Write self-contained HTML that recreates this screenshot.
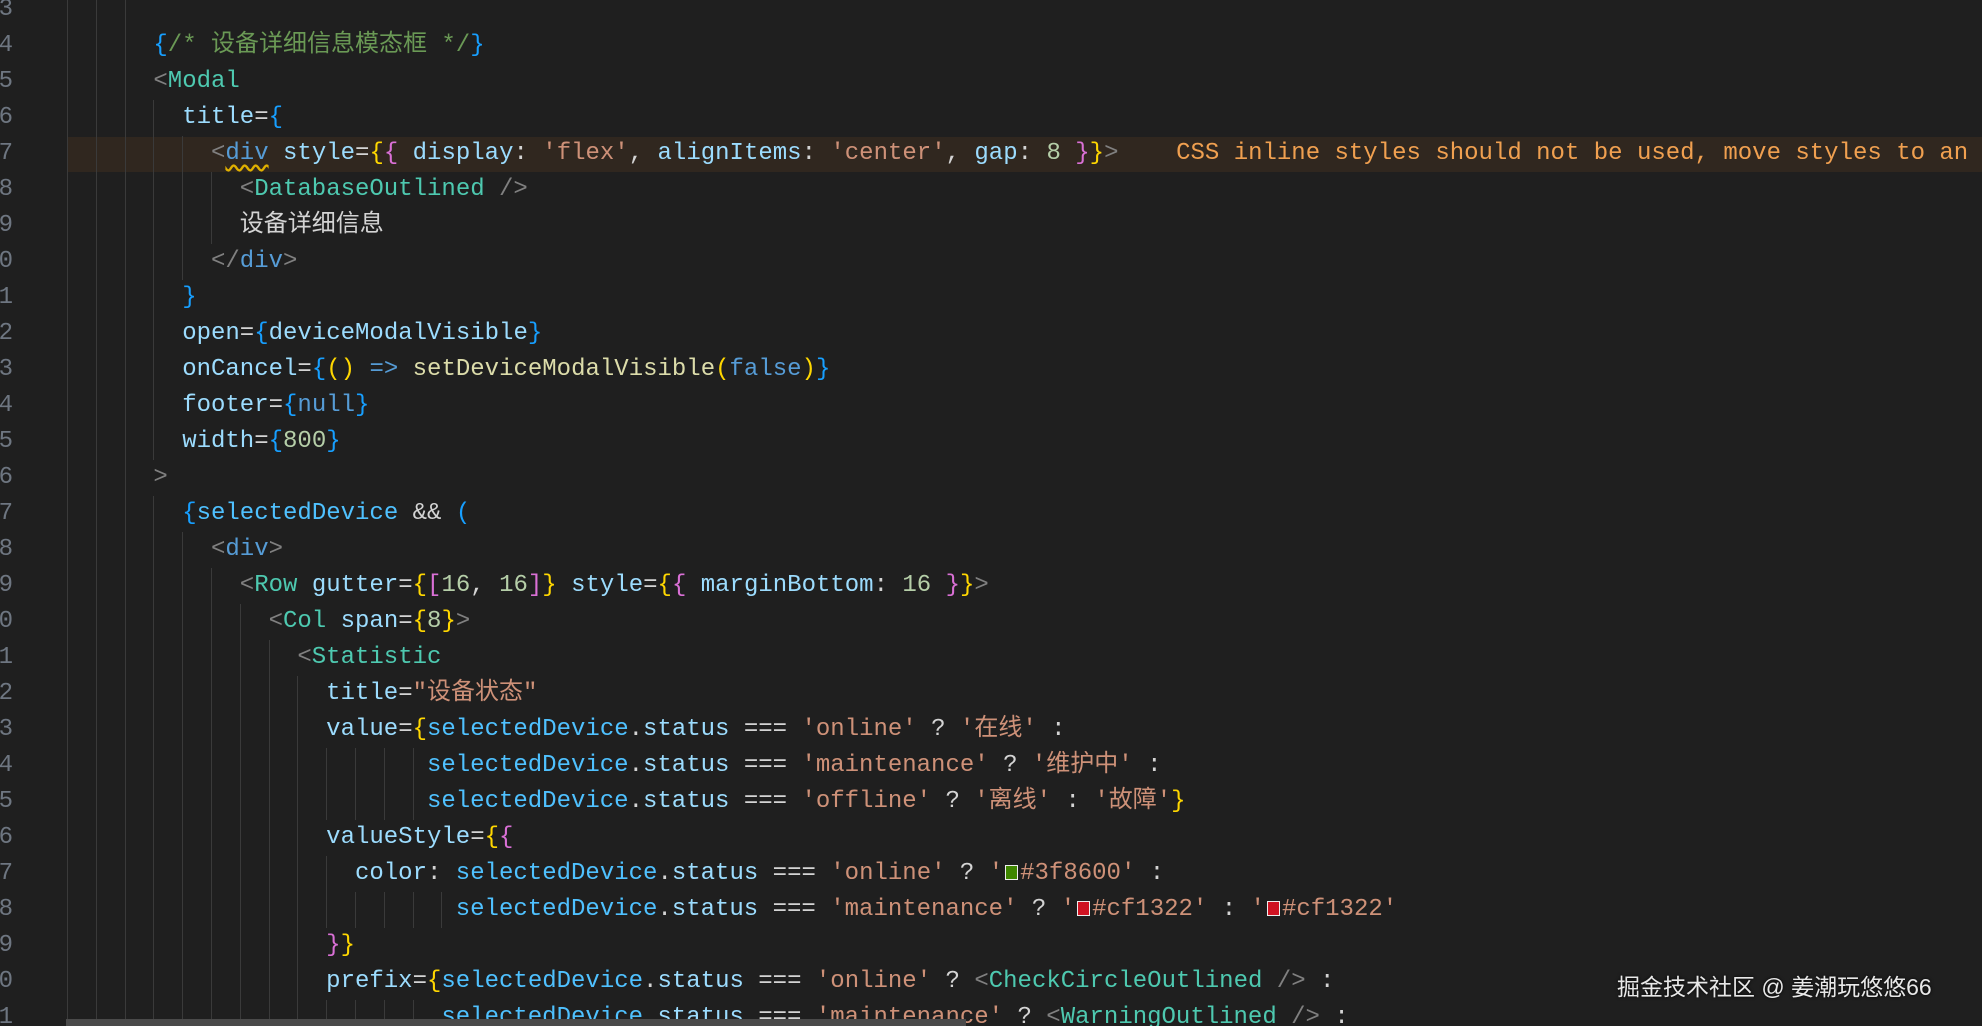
<!DOCTYPE html>
<html><head><meta charset="utf-8"><style>
html,body{margin:0;padding:0;background:#1f1f1f;width:1982px;height:1026px;overflow:hidden;position:relative}
.l{position:absolute;left:0;height:36px;line-height:36px;width:1982px;overflow:hidden;white-space:pre;font-family:"Liberation Mono","Noto Sans CJK SC",monospace;font-size:24px;color:#d4d4d4;margin-top:3px}
.l .ln{position:absolute;left:-30px;width:43px;text-align:right;color:#6e7681}
.l .code{position:absolute;left:67px;top:0}
i{display:inline-block;width:28.8px;height:36px;vertical-align:top;box-sizing:border-box;border-left:1px solid #3a3a3a;font-style:normal}
i.h{width:14.4px}
.hl{background:#30271f}
.t{color:#4ec9b0}.p{color:#808080}.a{color:#9cdcfe}.v{color:#4fc1ff}.s{color:#ce9178}.n{color:#b5cea8}.k{color:#569cd6}.f{color:#dcdcaa}.c{color:#6a9955}.y{color:#ffd700}.m{color:#da70d6}.b{color:#179fff}.o{color:#f0a050}
.sw{display:inline-block;width:11px;height:13px;border:1.5px solid #eee;margin:0 2px 0 2px;vertical-align:-1px}
.u{text-decoration:underline wavy #e0b000;text-underline-offset:5px}
</style></head><body>
<div class="l" style="top:-11px"><span class="ln">3</span><span class="code"><i></i><i></i><i></i></span></div>
<div class="l" style="top:25px"><span class="ln">4</span><span class="code"><i></i><i></i><i></i><span class="b">{</span><span class="c">/* 设备详细信息模态框 */</span><span class="b">}</span></span></div>
<div class="l" style="top:61px"><span class="ln">5</span><span class="code"><i></i><i></i><i></i><span class="p">&lt;</span><span class="t">Modal</span></span></div>
<div class="l" style="top:97px"><span class="ln">6</span><span class="code"><i></i><i></i><i></i><i></i><span class="a">title</span>=<span class="b">{</span></span></div>
<div class="l" style="top:133px"><div class="hl" style="position:absolute;left:67px;right:0;top:1px;height:35px"></div><span class="ln">7</span><span class="code"><i></i><i></i><i></i><i></i><i></i><span class="p">&lt;</span><span class="k u">div</span> <span class="a">style</span>=<span class="y">{</span><span class="m">{</span> <span class="a">display</span>: <span class="s">'flex'</span>, <span class="a">alignItems</span>: <span class="s">'center'</span>, <span class="a">gap</span>: <span class="n">8</span> <span class="m">}</span><span class="y">}</span><span class="p">&gt;</span>    <span class="o">CSS inline styles should not be used, move styles to an</span></span></div>
<div class="l" style="top:169px"><span class="ln">8</span><span class="code"><i></i><i></i><i></i><i></i><i></i><i></i><span class="p">&lt;</span><span class="t">DatabaseOutlined</span> <span class="p">/&gt;</span></span></div>
<div class="l" style="top:205px"><span class="ln">9</span><span class="code"><i></i><i></i><i></i><i></i><i></i><i></i>设备详细信息</span></div>
<div class="l" style="top:241px"><span class="ln">0</span><span class="code"><i></i><i></i><i></i><i></i><i></i><span class="p">&lt;/</span><span class="k">div</span><span class="p">&gt;</span></span></div>
<div class="l" style="top:277px"><span class="ln">1</span><span class="code"><i></i><i></i><i></i><i></i><span class="b">}</span></span></div>
<div class="l" style="top:313px"><span class="ln">2</span><span class="code"><i></i><i></i><i></i><i></i><span class="a">open</span>=<span class="b">{</span><span class="a">deviceModalVisible</span><span class="b">}</span></span></div>
<div class="l" style="top:349px"><span class="ln">3</span><span class="code"><i></i><i></i><i></i><i></i><span class="a">onCancel</span>=<span class="b">{</span><span class="y">()</span> <span class="k">=&gt;</span> <span class="f">setDeviceModalVisible</span><span class="y">(</span><span class="k">false</span><span class="y">)</span><span class="b">}</span></span></div>
<div class="l" style="top:385px"><span class="ln">4</span><span class="code"><i></i><i></i><i></i><i></i><span class="a">footer</span>=<span class="b">{</span><span class="k">null</span><span class="b">}</span></span></div>
<div class="l" style="top:421px"><span class="ln">5</span><span class="code"><i></i><i></i><i></i><i></i><span class="a">width</span>=<span class="b">{</span><span class="n">800</span><span class="b">}</span></span></div>
<div class="l" style="top:457px"><span class="ln">6</span><span class="code"><i></i><i></i><i></i><span class="p">&gt;</span></span></div>
<div class="l" style="top:493px"><span class="ln">7</span><span class="code"><i></i><i></i><i></i><i></i><span class="b">{</span><span class="v">selectedDevice</span> &amp;&amp; <span class="b">(</span></span></div>
<div class="l" style="top:529px"><span class="ln">8</span><span class="code"><i></i><i></i><i></i><i></i><i></i><span class="p">&lt;</span><span class="k">div</span><span class="p">&gt;</span></span></div>
<div class="l" style="top:565px"><span class="ln">9</span><span class="code"><i></i><i></i><i></i><i></i><i></i><i></i><span class="p">&lt;</span><span class="t">Row</span> <span class="a">gutter</span>=<span class="y">{</span><span class="m">[</span><span class="n">16</span>, <span class="n">16</span><span class="m">]</span><span class="y">}</span> <span class="a">style</span>=<span class="y">{</span><span class="m">{</span> <span class="a">marginBottom</span>: <span class="n">16</span> <span class="m">}</span><span class="y">}</span><span class="p">&gt;</span></span></div>
<div class="l" style="top:601px"><span class="ln">0</span><span class="code"><i></i><i></i><i></i><i></i><i></i><i></i><i></i><span class="p">&lt;</span><span class="t">Col</span> <span class="a">span</span>=<span class="y">{</span><span class="n">8</span><span class="y">}</span><span class="p">&gt;</span></span></div>
<div class="l" style="top:637px"><span class="ln">1</span><span class="code"><i></i><i></i><i></i><i></i><i></i><i></i><i></i><i></i><span class="p">&lt;</span><span class="t">Statistic</span></span></div>
<div class="l" style="top:673px"><span class="ln">2</span><span class="code"><i></i><i></i><i></i><i></i><i></i><i></i><i></i><i></i><i></i><span class="a">title</span>=<span class="s">"设备状态"</span></span></div>
<div class="l" style="top:709px"><span class="ln">3</span><span class="code"><i></i><i></i><i></i><i></i><i></i><i></i><i></i><i></i><i></i><span class="a">value</span>=<span class="y">{</span><span class="v">selectedDevice</span>.<span class="a">status</span> === <span class="s">'online'</span> ? <span class="s">'在线'</span> :</span></div>
<div class="l" style="top:745px"><span class="ln">4</span><span class="code"><i></i><i></i><i></i><i></i><i></i><i></i><i></i><i></i><i></i><i></i><i></i><i></i><i class="h"></i><span class="v">selectedDevice</span>.<span class="a">status</span> === <span class="s">'maintenance'</span> ? <span class="s">'维护中'</span> :</span></div>
<div class="l" style="top:781px"><span class="ln">5</span><span class="code"><i></i><i></i><i></i><i></i><i></i><i></i><i></i><i></i><i></i><i></i><i></i><i></i><i class="h"></i><span class="v">selectedDevice</span>.<span class="a">status</span> === <span class="s">'offline'</span> ? <span class="s">'离线'</span> : <span class="s">'故障'</span><span class="y">}</span></span></div>
<div class="l" style="top:817px"><span class="ln">6</span><span class="code"><i></i><i></i><i></i><i></i><i></i><i></i><i></i><i></i><i></i><span class="a">valueStyle</span>=<span class="y">{</span><span class="m">{</span></span></div>
<div class="l" style="top:853px"><span class="ln">7</span><span class="code"><i></i><i></i><i></i><i></i><i></i><i></i><i></i><i></i><i></i><i></i><span class="a">color</span>: <span class="v">selectedDevice</span>.<span class="a">status</span> === <span class="s">'online'</span> ? <span class="s">'<span class="sw" style="background:#3f8600"></span>#3f8600'</span> :</span></div>
<div class="l" style="top:889px"><span class="ln">8</span><span class="code"><i></i><i></i><i></i><i></i><i></i><i></i><i></i><i></i><i></i><i></i><i></i><i></i><i></i><i class="h"></i><span class="v">selectedDevice</span>.<span class="a">status</span> === <span class="s">'maintenance'</span> ? <span class="s">'<span class="sw" style="background:#cf1322"></span>#cf1322'</span> : <span class="s">'<span class="sw" style="background:#cf1322"></span>#cf1322'</span></span></div>
<div class="l" style="top:925px"><span class="ln">9</span><span class="code"><i></i><i></i><i></i><i></i><i></i><i></i><i></i><i></i><i></i><span class="m">}</span><span class="y">}</span></span></div>
<div class="l" style="top:961px"><span class="ln">0</span><span class="code"><i></i><i></i><i></i><i></i><i></i><i></i><i></i><i></i><i></i><span class="a">prefix</span>=<span class="y">{</span><span class="v">selectedDevice</span>.<span class="a">status</span> === <span class="s">'online'</span> ? <span class="p">&lt;</span><span class="t">CheckCircleOutlined</span> <span class="p">/&gt;</span> :</span></div>
<div class="l" style="top:997px"><span class="ln">1</span><span class="code"><i></i><i></i><i></i><i></i><i></i><i></i><i></i><i></i><i></i><i></i><i></i><i></i><i></i><span class="v">selectedDevice</span>.<span class="a">status</span> === <span class="s">'maintenance'</span> ? <span class="p">&lt;</span><span class="t">WarningOutlined</span> <span class="p">/&gt;</span> :</span></div>
<div style="position:absolute;left:66px;top:1019px;width:900px;height:7px;background:#4a4a4a"></div>
<div style="position:absolute;left:1617px;top:968px;font-family:'Liberation Sans','Noto Sans CJK SC',sans-serif;font-size:23px;color:#e8e8e8;text-shadow:0 0 3px #000;white-space:nowrap">掘金技术社区 @ 姜潮玩悠悠66</div>
</body></html>
